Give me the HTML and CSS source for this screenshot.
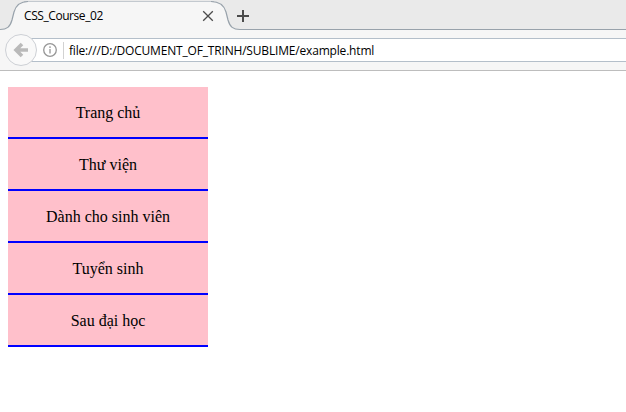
FILE: index.html
```html
<!DOCTYPE html>
<html lang="vi">
<head>
<meta charset="utf-8">
<title>CSS_Course_02</title>
<link rel="stylesheet" href="styles.css">
</head>
<body>
<header class="browser">
  <div class="tabbar">
    <svg class="tab-shape" width="626" height="31" viewBox="0 0 626 31" aria-hidden="true">
      <path class="tab-fill" d="M0 29.500C7 29.500 10 27 12 20L14 12C16 5 20 1.500 28 1.500H211C220 1.500 224 5 226 12L228 20C230 27 233 29.500 240 29.500V31H0Z"/>
      <path class="tab-top" d="M24 1.500H214"/>
      <path class="tab-line" d="M0 29.500C7 29.500 10 27 12 20L14 12C16 5 20 1.500 28 1.500M211 1.500C220 1.500 224 5 226 12L228 20C230 27 233 29.500 240 29.500H626"/>
    </svg>
    <span class="tab-title">CSS_Course_02</span>
    <svg class="close" width="12" height="12" viewBox="0 0 12 12"><path d="M1.200 1.200L10.800 10.800M10.800 1.200L1.200 10.800"/></svg>
    <svg class="plus" width="12" height="12" viewBox="0 0 12 12"><path d="M6 0V12M0 6H12"/></svg>
  </div>
  <div class="toolbar">
    <div class="address">
      <svg class="info" width="14" height="14" viewBox="0 0 14 14"><circle cx="7" cy="7" r="6.300"/><path d="M7 6V10.500M7 3.300V4.900"/></svg>
      <span class="divider"></span>
      <span class="url">file:///D:/DOCUMENT_OF_TRINH/SUBLIME/example.html</span>
    </div>
    <svg class="back" width="34" height="34" viewBox="0 0 34 34"><circle cx="17" cy="17" r="15.500"/><path d="M24 17H12.500M18 11L12 17L18 23"/></svg>
  </div>
</header>
<ul class="menu">
  <li>Trang chủ</li>
  <li>Thư viện</li>
  <li>Dành cho sinh viên</li>
  <li>Tuyển sinh</li>
  <li>Sau đại học</li>
</ul>
</body>
</html>
```
FILE: styles.css
```css
body {
  margin: 0;
  background: #fff;
  color: #000;
  overflow: hidden;
}
.browser {
  font: 12px/16px "Open Sans", "Noto Sans", sans-serif;
}
.tabbar {
  position: relative;
  display: flex;
  align-items: center;
  box-sizing: border-box;
  height: 30px;
  padding: 2px 0 0 24px;
  background: #eaeaea;
}
.tab-shape {
  position: absolute;
  left: 0;
  top: 0;
}
.tab-fill { fill: #f6f6f6; }
.tab-top { stroke: #c3c9cf; }
.tab-line {
  fill: none;
  stroke: #98a2ab;
  stroke-width: 1.200;
}
.tab-title {
  position: relative;
  width: 178px;
  letter-spacing: -0.43px;
  white-space: nowrap;
}
.close, .plus {
  position: relative;
  fill: none;
  stroke: #4b4b4b;
}
.close { stroke-width: 1.300; }
.plus {
  margin-left: 23px;
  stroke-width: 2;
}
.toolbar {
  position: relative;
  box-sizing: border-box;
  height: 41px;
  padding: 8px 0 0 21px;
  background: #f6f6f6;
  border-bottom: 1px solid #bdbdbd;
}
.address {
  display: flex;
  align-items: center;
  box-sizing: border-box;
  height: 24px;
  padding-left: 22px;
  background: #fff;
  border: solid #b4bfca;
  border-width: 1px 0;
}
.info {
  fill: none;
  stroke: #969696;
  stroke-width: 1.300;
}
.divider {
  width: 1px;
  height: 17px;
  margin: 0 5px 0 6px;
  background: #d2d2d2;
}
.url {
  padding-top: 2px;
  letter-spacing: -0.18px;
  white-space: nowrap;
}
.back {
  position: absolute;
  left: 4px;
  top: 3px;
}
.back circle {
  fill: #f9f9f9;
  stroke: #cdd0d5;
}
.back path {
  fill: none;
  stroke: #bababa;
  stroke-width: 3.600;
}
.menu {
  width: 200px;
  margin: 16px 0 0 8px;
  padding: 0;
  list-style: none;
  font: 16px/52px "Liberation Serif", "Times New Roman", serif;
  text-align: center;
}
.menu li {
  height: 50px;
  background: pink;
  border-bottom: 2px solid #00f;
}
```
